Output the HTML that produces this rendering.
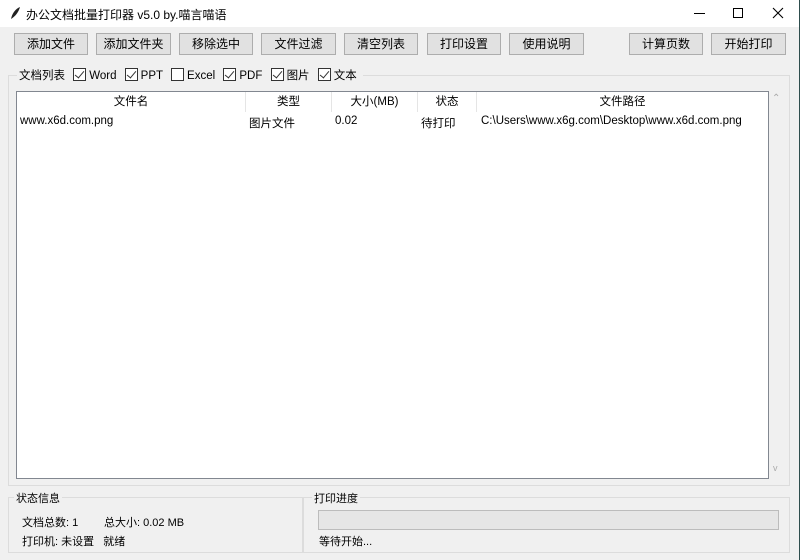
<!DOCTYPE html>
<html><head><meta charset="utf-8"><style>
*{margin:0;padding:0;box-sizing:border-box}
body{width:800px;height:560px;background:#f0f0f0;font-family:"Liberation Sans","Noto Sans CJK SC",sans-serif;font-size:12px;color:#000;position:relative;overflow:hidden}
.a{position:absolute}
.title{left:0;top:0;width:800px;height:27px;background:#fff}
.btn{position:absolute;top:33px;height:22px;background:#e1e1e1;border:1px solid #adadad;text-align:center;line-height:20px;font-size:12px}
.frame{position:absolute;border:1px solid #dcdcdc}
.lbl{position:absolute;background:#f0f0f0;padding:0 2px;font-size:11.5px}
.cb{display:inline-block;width:13px;height:13px;border:1px solid #333;background:#fff;vertical-align:-2px;margin-right:3px;margin-left:5px;position:relative}
.cb.on::after{content:"";position:absolute;left:3px;top:0px;width:4px;height:8px;border:solid #333;border-width:0 1px 1px 0;transform:rotate(40deg)}
.hd{position:absolute;top:92px;height:20px;line-height:20px;text-align:center;border-right:1px solid #e5e5e5;background:#fff;font-size:11.5px}
.r{position:absolute;top:115px;font-size:11.5px}
.s{font-size:11px}
</style></head><body>
<div class="a title"></div>
<svg class="a" style="left:8px;top:6px" width="14" height="14" viewBox="0 0 14 14"><path d="M3 13 C4 8 7 3 12 1 C11 5 8 10 3 13Z" fill="#222"/></svg>
<div class="a" style="left:26px;top:6px;font-size:12px">办公文档批量打印器 v5.0 by.喵言喵语</div>
<div class="a" style="left:694px;top:13px;width:11px;height:1px;background:#000"></div>
<div class="a" style="left:733px;top:8px;width:10px;height:10px;border:1px solid #000"></div>
<svg class="a" style="left:772px;top:7px" width="12" height="12"><path d="M1 1L11 11M11 1L1 11" stroke="#000" stroke-width="1.1"/></svg>
<div class="a" style="right:0;top:0;width:1px;height:560px;background:#2e4d4d"></div>

<div class="btn" style="left:14px;width:74px">添加文件</div>
<div class="btn" style="left:96px;width:75px">添加文件夹</div>
<div class="btn" style="left:179px;width:74px">移除选中</div>
<div class="btn" style="left:261px;width:75px">文件过滤</div>
<div class="btn" style="left:344px;width:74px">清空列表</div>
<div class="btn" style="left:427px;width:74px">打印设置</div>
<div class="btn" style="left:509px;width:75px">使用说明</div>
<div class="btn" style="left:629px;width:74px">计算页数</div>
<div class="btn" style="left:711px;width:75px">开始打印</div>

<div class="frame" style="left:8px;top:75px;width:782px;height:411px"></div>
<div class="lbl" style="left:17px;top:67px;padding-right:6px">文档列表 <span class="cb on"></span>Word <span class="cb on"></span>PPT <span class="cb"></span>Excel <span class="cb on"></span>PDF <span class="cb on"></span>图片 <span class="cb on"></span>文本</div>

<div class="a" style="left:16px;top:91px;width:753px;height:388px;background:#fff;border:1px solid #828790"></div>
<div class="hd" style="left:17px;width:229px">文件名</div>
<div class="hd" style="left:246px;width:86px">类型</div>
<div class="hd" style="left:332px;width:86px">大小(MB)</div>
<div class="hd" style="left:418px;width:59px">状态</div>
<div class="hd" style="left:477px;width:291px;border-right:none">文件路径</div>
<div class="r" style="left:20px">www.x6d.com.png</div>
<div class="r" style="left:249px">图片文件</div>
<div class="r" style="left:335px">0.02</div>
<div class="r" style="left:421px">待打印</div>
<div class="r" style="left:481px">C:\Users\www.x6g.com\Desktop\www.x6d.com.png</div>
<div class="a" style="left:772px;top:93px;color:#aaa;font-size:10px">&#8963;</div>
<div class="a" style="left:773px;top:463px;color:#aaa;font-size:9px">v</div>

<div class="frame" style="left:8px;top:497px;width:295px;height:56px"></div>
<div class="lbl s" style="left:14px;top:490px">状态信息</div>
<div class="a s" style="left:22px;top:514px">文档总数: 1</div>
<div class="a s" style="left:104px;top:514px">总大小: 0.02 MB</div>
<div class="a s" style="left:22px;top:533px">打印机: 未设置 &nbsp;&nbsp;就绪</div>
<div class="frame" style="left:303px;top:497px;width:487px;height:56px"></div>
<div class="lbl s" style="left:312px;top:490px">打印进度</div>
<div class="a" style="left:318px;top:510px;width:461px;height:20px;background:#e6e6e6;border:1px solid #bcbcbc"></div>
<div class="a s" style="left:319px;top:533px">等待开始...</div>
</body></html>
